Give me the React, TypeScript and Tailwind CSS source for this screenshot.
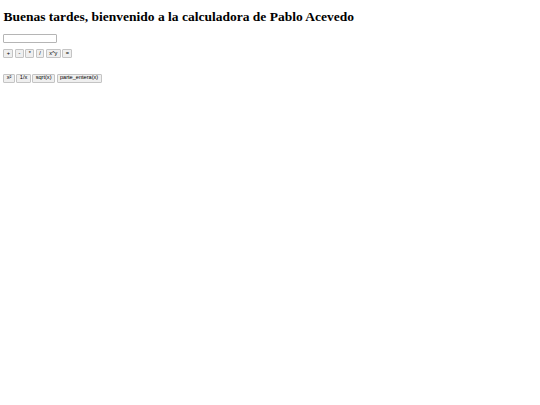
export default function App() {
  const ops = ["+", "-", "*", "/", "x^y", "="];
  const fns = ["x²", "1/x", "sqrt(x)", "parte_entera(x)"];

  return (
    <div className="min-h-[405px] bg-white px-[3.4px] pt-[9px] text-black [font-family:'Liberation_Serif',serif]">
      <h1 className="text-[13.5px] font-bold leading-[15.5px]">
        Buenas tardes, bienvenido a la calculadora de Pablo Acevedo
      </h1>

      <input
        type="text"
        className="mt-[9px] block h-[9px] w-[54px] rounded-[1px] border border-[#b5b5b5] bg-white"
      />

      <div className="mt-[6.5px] flex gap-[1.6px]">
        {ops.map((o) => (
          <Btn key={o} label={o} />
        ))}
      </div>

      <div className="mt-[15.5px] flex gap-[1.6px]">
        {fns.map((f) => (
          <Btn key={f} label={f} />
        ))}
      </div>
    </div>
  );
}

function Btn({ label }: { label: string }) {
  return (
    <button className="flex h-[9px] items-center rounded-[1px] border border-[#c4c4c4] bg-[#efefef] px-[2.4px] text-[5.6px] leading-none text-black [font-family:'Liberation_Sans',Arial,sans-serif]">
      {label}
    </button>
  );
}
